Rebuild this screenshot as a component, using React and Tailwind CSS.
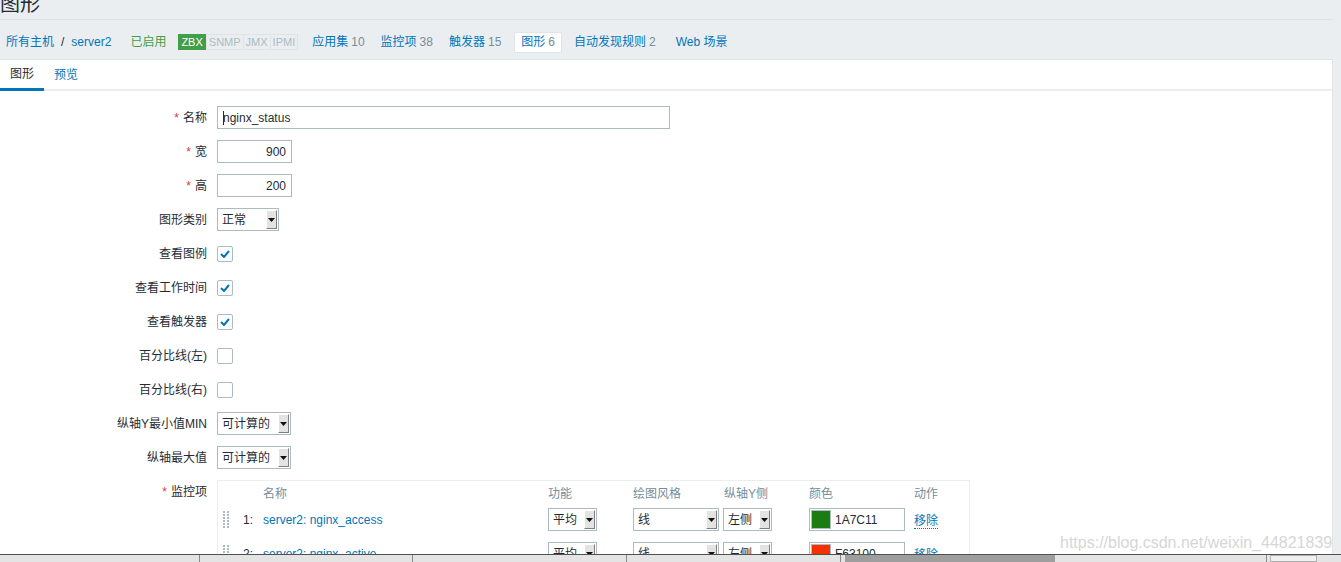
import React from 'react'

const Caret = () => (
  <svg width="7" height="4" viewBox="0 0 7 4"><path d="M0 0h7L3.5 4z" fill="#111" /></svg>
)

function Select({ value, className }) {
  return (
    <div className={`flex h-[23px] items-stretch border border-[#acbbc2] bg-white ${className}`}>
      <span className="flex flex-1 items-center pl-[4px] pt-px">{value}</span>
      <span className="my-px mr-px flex w-[11px] items-center justify-center border border-t-white border-l-white border-r-[#7f7f7f] border-b-[#7f7f7f] bg-[#e3e3e3]">
        <Caret />
      </span>
    </div>
  )
}

function Check({ on }) {
  return (
    <span className="flex h-[16px] w-[16px] items-center justify-center rounded-[2px] border border-[#acbbc2] bg-white">
      {on && (
        <svg width="10" height="8" viewBox="0 0 10 8">
          <path d="M1 4l3 3 5-6" fill="none" stroke="#0275b8" strokeWidth="2" />
        </svg>
      )}
    </span>
  )
}

const Req = () => <span className="mr-[4px] text-[#e33734]">*</span>

const Label = ({ children }) => (
  <label className="h-[23px] pt-px text-right leading-[23px]">{children}</label>
)

function Handle() {
  return (
    <svg width="6" height="18" viewBox="0 0 6 18">
      {[0, 3, 6, 9, 12, 15].map(y => (
        <g key={y} fill="#acbbc2">
          <rect x="0" y={y} width="2" height="2" />
          <rect x="4" y={y} width="2" height="2" />
        </g>
      ))}
    </svg>
  )
}

function NavItem({ label, count, active, ml = 'ml-[5px]' }) {
  return (
    <span className={`${ml} flex h-[21px] items-center rounded-[2px] px-[6px] ${active ? 'border border-[#dfe4e7] bg-white' : ''}`}>
      <span className="text-[#0275b8]">{label}</span>
      {count && <span className="ml-[3px] text-[#768d99]">{count}</span>}
    </span>
  )
}

const items = [
  { n: '1:', name: 'server2: nginx_access', color: '#1a7c11', code: '1A7C11' },
  { n: '2:', name: 'server2: nginx_active', color: '#f63100', code: 'F63100' },
]

export default function App() {
  return (
    <div className="relative flex h-[562px] flex-col overflow-hidden bg-[#ebeef0] font-['Liberation_Sans','Noto_Sans_CJK_SC',sans-serif] text-[12px] text-[#1f2c33]">
      <div className="w-[1333px] flex-1 overflow-hidden">
        <div className="h-[20px] overflow-hidden border-b border-[#dfe4e7]">
          <h1 className="-mt-[6px] text-[20px] leading-[20px]">图形</h1>
        </div>

        <nav className="flex h-[39px] items-center pt-[5px]">
          <span className="ml-[6px] text-[#0275b8]">所有主机</span>
          <span className="mx-[7px]">/</span>
          <span className="text-[#0275b8]">server2</span>
          <span className="ml-[19px] text-[#429e47]">已启用</span>
          <span className="ml-[12px] flex h-[16px] text-[11px] leading-[16px]">
            <span className="bg-[#429e47] px-[3px] text-white">ZBX</span>
            <span className="border border-[#dfe4e7] px-[2px] leading-[14px] text-[#acbbc2]">SNMP</span>
            <span className="border border-l-0 border-[#dfe4e7] px-[2px] leading-[14px] text-[#acbbc2]">JMX</span>
            <span className="border border-l-0 border-[#dfe4e7] px-[2px] leading-[14px] text-[#acbbc2]">IPMI</span>
          </span>
          <span className="ml-[3px]" />
          <NavItem label="应用集" count="10" />
          <NavItem label="监控项" count="38" ml="ml-[4px]" />
          <NavItem label="触发器" count="15" ml="ml-[4px]" />
          <NavItem label="图形" count="6" active ml="ml-[7px]" />
          <NavItem label="自动发现规则" count="2" ml="ml-[6px]" />
          <NavItem label="Web 场景" ml="ml-[8px]" />
        </nav>

        <div className="h-full border-t border-r border-[#dfe4e7] bg-white">
          <div className="flex h-[31px] border-b-2 border-[#ebeef0]">
            <span className="-mb-[2px] flex h-[31px] items-center border-b-[3px] border-[#0275b8] px-[10px] pb-[1px]">图形</span>
            <span className="flex items-center px-[10px] text-[#0275b8]">预览</span>
          </div>

          <div className="pt-[15px]">
            <div className="grid grid-cols-[207px_1fr] items-start gap-x-[10px] gap-y-[11px]">
              <Label><Req />名称</Label>
              <div className="flex h-[23px] w-[453px] items-center border border-[#acbbc2] pl-[5px] pt-px">
                <span className="mr-[-1px] h-[14px] w-px bg-[#1f2c33]" />nginx_status
              </div>

              <Label><Req />宽</Label>
              <div className="flex h-[23px] w-[75px] items-center justify-end border border-[#acbbc2] pr-[5px] pt-px">900</div>

              <Label><Req />高</Label>
              <div className="flex h-[23px] w-[75px] items-center justify-end border border-[#acbbc2] pr-[5px] pt-px">200</div>

              <Label>图形类别</Label>
              <Select value="正常" className="w-[62px]" />

              <Label>查看图例</Label>
              <div className="flex h-[23px] items-center"><Check on /></div>

              <Label>查看工作时间</Label>
              <div className="flex h-[23px] items-center"><Check on /></div>

              <Label>查看触发器</Label>
              <div className="flex h-[23px] items-center"><Check on /></div>

              <Label>百分比线(左)</Label>
              <div className="flex h-[23px] items-center"><Check /></div>

              <Label>百分比线(右)</Label>
              <div className="flex h-[23px] items-center"><Check /></div>

              <Label>纵轴Y最小值MIN</Label>
              <Select value="可计算的" className="w-[74px]" />

              <Label>纵轴最大值</Label>
              <Select value="可计算的" className="w-[74px]" />

              <Label><Req />监控项</Label>
              <div className="w-[753px] border border-[#ebeef0] pt-[3px] pl-[2px]">
                <div className="flex h-[20px] items-center text-[#768d99]">
                  <span className="w-[43px]" />
                  <span className="w-[285px]">名称</span>
                  <span className="w-[85px]">功能</span>
                  <span className="w-[91px]">绘图风格</span>
                  <span className="w-[85px]">纵轴Y侧</span>
                  <span className="w-[105px]">颜色</span>
                  <span>动作</span>
                </div>
                {items.map(it => (
                  <div key={it.n} className="flex h-[34px] items-start pt-[4px]">
                    <span className="flex h-[23px] w-[23px] items-center pl-[3px]"><Handle /></span>
                    <span className="w-[20px] pt-px leading-[23px]">{it.n}</span>
                    <span className="w-[285px] pt-px leading-[23px] text-[#0275b8]">{it.name}</span>
                    <span className="w-[85px]"><Select value="平均" className="w-[49px]" /></span>
                    <span className="w-[90px]"><Select value="线" className="w-[86px]" /></span>
                    <span className="w-[86px]"><Select value="左侧" className="w-[49px]" /></span>
                    <span className="w-[105px]">
                      <span className="flex h-[23px] w-[96px] items-center border border-[#acbbc2] pl-[1px]">
                        <span className="h-[19px] w-[20px] border border-[#acbbc2]" style={{ background: it.color }} />
                        <span className="ml-[4px] pt-px">{it.code}</span>
                      </span>
                    </span>
                    <span className="pt-[2px] leading-[23px]">
                      <span className="border-b border-dotted border-[#0275b8] text-[#0275b8]">移除</span>
                    </span>
                  </div>
                ))}
              </div>
            </div>
          </div>
        </div>
      </div>

      <div className="flex h-[8px] shrink-0 border-t border-[#505050] bg-[#e4e4e4]">
        <span className="w-[200px] border-r border-[#8a8a8a]" />
        <span className="w-[213px] border-r border-[#8a8a8a]" />
        <span className="w-[214px] border-r border-[#8a8a8a]" />
        <span className="w-[214px] border-r border-[#8a8a8a]" />
        <span className="ml-[4px] w-[210px] bg-[#9e9e9e]" />
        <span className="w-[212px] border-r border-[#8a8a8a]" />
        <span className="ml-[3px] w-[47px] border border-[#b0b0b0] bg-[#f0f0f0]" />
      </div>

      <span className="absolute top-[533px] left-[1060px] text-[16px] leading-[20px] text-[#d6d6d6]">
        https://blog.csdn.net/weixin_44821839
      </span>
    </div>
  )
}
